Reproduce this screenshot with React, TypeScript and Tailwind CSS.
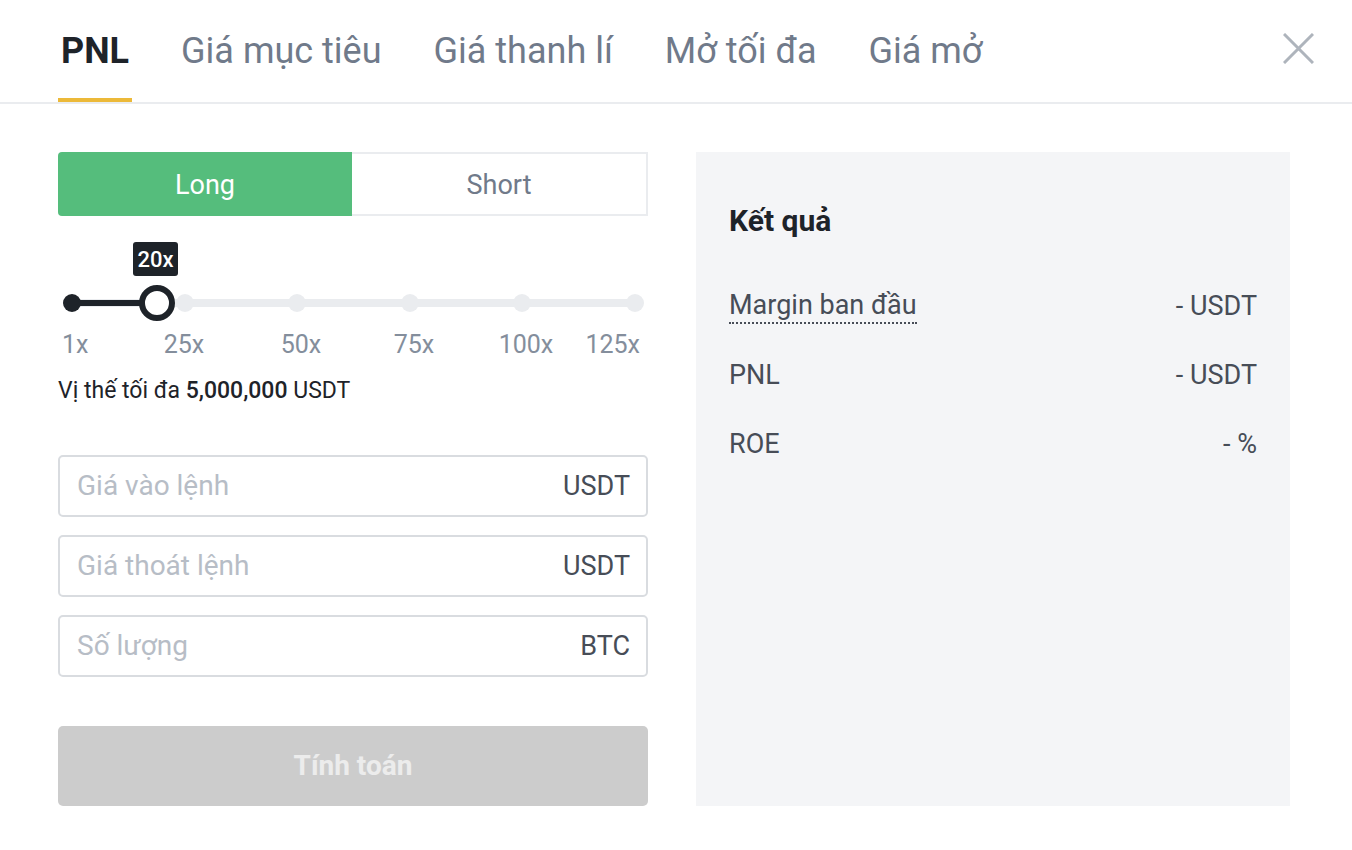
import * as React from "react"

const TABS = ["PNL", "Giá mục tiêu", "Giá thanh lí", "Mở tối đa", "Giá mở"]

const DOTS = [14, 126.5, 239, 351.5, 464, 576.5]

const LABELS: { text: string; left: number; align: "l" | "c" | "r" }[] = [
  { text: "1x", left: 4, align: "l" },
  { text: "25x", left: 126, align: "c" },
  { text: "50x", left: 243, align: "c" },
  { text: "75x", left: 356, align: "c" },
  { text: "100x", left: 468, align: "c" },
  { text: "125x", left: 582, align: "r" },
]

const INPUTS = [
  { placeholder: "Giá vào lệnh", unit: "USDT" },
  { placeholder: "Giá thoát lệnh", unit: "USDT" },
  { placeholder: "Số lượng", unit: "BTC" },
]

const RESULTS = [
  { label: "Margin ban đầu", value: "- USDT", dotted: true },
  { label: "PNL", value: "- USDT" },
  { label: "ROE", value: "- %" },
]

function Slider() {
  const handle = 99
  return (
    <div className="relative mt-[22px] h-[126px]">
      <div className="absolute left-[75px] top-[4px] flex h-[34px] w-[45px] items-center justify-center rounded-[3px] bg-[#1e2329] text-[22px] font-medium text-white">
        20x
      </div>
      <div className="absolute left-[14px] right-[13px] top-[61px] h-[8px] rounded-full bg-[#eaecef]" />
      {DOTS.map((x, i) => (
        <div
          key={i}
          className={`absolute top-[56px] h-[18px] w-[18px] -translate-x-1/2 rounded-full ${i === 0 ? "bg-[#1e2329]" : "bg-[#eaecef]"}`}
          style={{ left: x }}
        />
      ))}
      <div className="absolute left-[14px] top-[62px] h-[6px] bg-[#1e2329]" style={{ width: handle - 14 }} />
      <div
        className="absolute top-[47px] h-[36px] w-[36px] -translate-x-1/2 rounded-full border-[6px] border-[#1e2329] bg-white"
        style={{ left: handle }}
      />
      {LABELS.map((l) => (
        <span
          key={l.text}
          className={`absolute top-[91px] text-[25px] leading-[32px] text-[#848e9c] ${l.align === "c" ? "-translate-x-1/2" : l.align === "r" ? "-translate-x-full" : ""}`}
          style={{ left: l.left }}
        >
          {l.text}
        </span>
      ))}
    </div>
  )
}

export default function App() {
  return (
    <div className="h-[850px] w-[1352px] bg-white font-['Roboto',sans-serif] text-[#1e2329]">
      <div className="flex h-[104px] items-start justify-between border-b-2 border-[#eaecef] pl-[58px] pr-[38px]">
        <div className="flex gap-[46px]">
          {TABS.map((t, i) => (
            <div
              key={t}
              className={`flex h-[102px] items-center border-b-4 px-[3px] pt-[4px] text-[36px] ${i === 0 ? "border-[#ecb939] font-bold text-[#1e2329]" : "border-transparent text-[#707a8a]"}`}
            >
              {t}
            </div>
          ))}
        </div>
        <svg className="mt-[33px]" width="31" height="31" viewBox="0 0 31 31" fill="none" stroke="#aeb4bc" strokeWidth="3">
          <path d="M1 1L30 30M30 1L1 30" />
        </svg>
      </div>

      <div className="flex gap-[48px] pl-[58px] pt-[48px]">
        <div className="flex w-[590px] flex-col">
          <div className="flex h-[64px]">
            <div className="flex flex-1 items-center justify-center rounded-l-[4px] bg-[#55bd7c] pt-[3px] text-[27px] text-white">
              Long
            </div>
            <div className="flex flex-1 items-center justify-center border-2 border-l-0 border-[#eaecef] pt-[3px] text-[27px] text-[#707a8a]">
              Short
            </div>
          </div>

          <Slider />

          <div className="mt-[13px] text-[23px] leading-[28px] text-[#1e2329]">
            Vị thế tối đa <span className="font-medium">5,000,000</span> USDT
          </div>

          <div className="mt-[50px] flex flex-col gap-[18px]">
            {INPUTS.map((f) => (
              <div
                key={f.placeholder}
                className="flex h-[62px] items-center justify-between rounded-[5px] border-2 border-[#d9dce0] pl-[17px] pr-[16px]"
              >
                <span className="text-[28px] text-[#b7bdc6]">{f.placeholder}</span>
                <span className="text-[27px] text-[#474d57]">{f.unit}</span>
              </div>
            ))}
          </div>

          <div className="mt-[49px] flex h-[80px] items-center justify-center rounded-[5px] bg-[#cccccc] text-[28px] font-bold text-[#ececec]">
            Tính toán
          </div>
        </div>

        <div className="flex h-[654px] w-[594px] flex-col bg-[#f4f5f7] px-[33px] pt-[49px]">
          <div className="text-[30px] font-bold leading-[40px] text-[#1e2329]">Kết quả</div>
          <div className="mt-[47px] flex flex-col gap-[33px]">
            {RESULTS.map((r) => (
              <div key={r.label} className="flex h-[36px] items-center justify-between text-[27px] text-[#474d57]">
                <span className={r.dotted ? "border-b-2 border-dotted border-[#474d57] leading-[34px]" : "leading-[34px]"}>
                  {r.label}
                </span>
                <span className="leading-[34px]">{r.value}</span>
              </div>
            ))}
          </div>
        </div>
      </div>
    </div>
  )
}
